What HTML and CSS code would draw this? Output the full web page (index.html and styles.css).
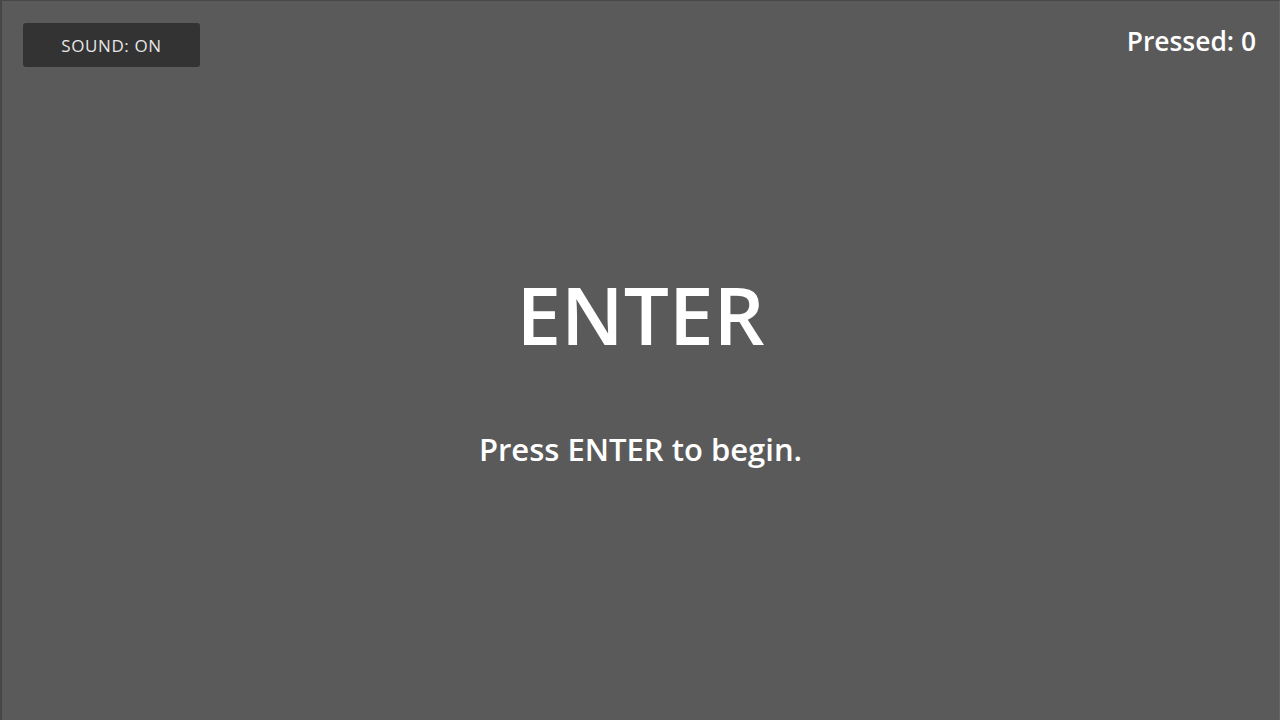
FILE: index.html
```html
<!DOCTYPE html>
<html>
<head>
<meta charset="utf-8">
<link rel="stylesheet" href="styles.css">
</head>
<body>
<div class="app">
  <header class="topbar">
    <button class="sound">SOUND: ON</button>
    <div class="counter">Pressed: 0</div>
  </header>
  <main class="center">
    <h1 class="key">ENTER</h1>
    <p class="hint">Press ENTER to begin.</p>
  </main>
</div>
</body>
</html>
```
FILE: styles.css
```css
html, body {
  margin: 0;
  padding: 0;
  height: 100%;
}
body {
  background: #5a5a5a;
  font-family: "Open Sans", "Noto Sans", sans-serif;
  color: #fff;
  overflow: hidden;
}
.app {
  height: 720px;
  box-sizing: border-box;
  border-top: 1px solid #474747;
  border-left: 2px solid #474747;
  border-right: 1px solid #666;
  display: flex;
  flex-direction: column;
}
.topbar {
  display: flex;
  justify-content: space-between;
  align-items: flex-start;
  padding: 22px 23px 0 21px;
}
.sound {
  width: 177px;
  height: 44px;
  background: #333;
  border: none;
  border-radius: 3px;
  color: #e6e6e6;
  font-family: "Open Sans", sans-serif;
  font-size: 17px;
  font-weight: 500;
  letter-spacing: 0.6px;
  padding: 0;
}
.counter {
  font-size: 26.4px;
  font-weight: 600;
  line-height: 1;
  padding-top: 5px;
}
.center {
  flex: 1;
  display: flex;
  flex-direction: column;
  align-items: center;
  padding-top: 207px;
}
.key {
  margin: 0;
  font-size: 80px;
  font-weight: 600;
  line-height: 1;
}
.hint {
  margin: 80px 0 0;
  font-size: 31px;
  font-weight: 600;
  line-height: 1;
}
```
